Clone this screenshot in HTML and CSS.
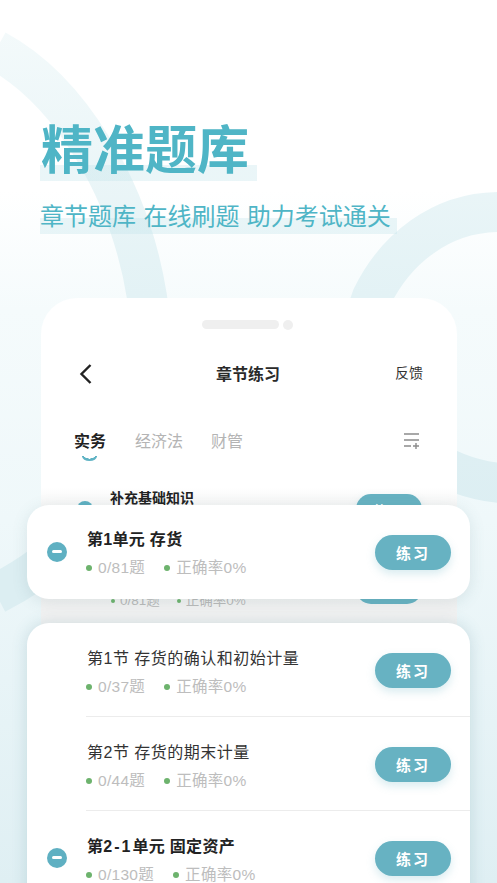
FILE: index.html
```html
<!DOCTYPE html>
<html lang="zh-CN">
<head>
<meta charset="utf-8">
<title>精准题库</title>
<link rel="stylesheet" href="styles.css">
</head>
<body>
<svg class="bg-arcs" viewBox="0 0 497 883" aria-hidden="true">
  <defs>
    <linearGradient id="arcFade" gradientUnits="userSpaceOnUse" x1="0" y1="20" x2="0" y2="520">
      <stop offset="0" stop-color="#f4fafb"/>
      <stop offset=".55" stop-color="#e3f2f5"/>
      <stop offset="1" stop-color="#dceef2"/>
    </linearGradient>
  </defs>
  <path class="arc" d="M-4 50C70 90 130 190 147 297C165 420 120 530 -4 594"/>
  <path class="arc" d="M500 212C440 212 395 250 372 297C350 350 380 470 500 483"/>
</svg>
<main class="screen">
  <header class="hero">
    <h1 class="hero-title"><span class="mark">精准题库</span></h1>
    <p class="hero-sub"><span class="mark">章节题库 在线刷题 助力考试通关</span></p>
  </header>
  <section class="phone">
    <div class="notch"><span class="notch-bar"></span><span class="notch-dot"></span></div>
    <div class="nav">
      <svg class="back" viewBox="0 0 14 22"><path d="M12 2 3 11l9 9"/></svg>
      <span class="nav-title">章节练习</span>
      <span class="nav-action">反馈</span>
    </div>
    <div class="tabs">
      <span class="tab active">实务</span>
      <span class="tab">经济法</span>
      <span class="tab">财管</span>
      <svg class="filter" viewBox="0 0 16 16"><path d="M0 1h15M0 7h15M0 13h7M9 13h6M12 10v6"/></svg>
    </div>
    <div class="behind">
      <span class="minus behind-minus"></span>
      <div class="behind-title">补充基础知识</div>
      <span class="btn behind-btn">练习</span>
      <div class="meta behind-meta"><span class="dot"></span><span>0/81题</span><span class="dot second"></span><span>正确率0%</span></div>
      <span class="behind-btn2"></span>
    </div>
  </section>
  <article class="card card-float">
    <div class="row">
      <span class="minus"></span>
      <div class="info">
        <div class="name strong">第1单元 存货</div>
        <div class="meta"><span class="dot"></span><span>0/81题</span><span class="dot second"></span><span>正确率0%</span></div>
      </div>
      <span class="btn">练习</span>
    </div>
  </article>
  <article class="card card-list">
    <div class="row line">
      <div class="info">
        <div class="name">第1节 存货的确认和初始计量</div>
        <div class="meta"><span class="dot"></span><span>0/37题</span><span class="dot second"></span><span>正确率0%</span></div>
      </div>
      <span class="btn">练习</span>
    </div>
    <div class="row line">
      <div class="info">
        <div class="name">第2节 存货的期末计量</div>
        <div class="meta"><span class="dot"></span><span>0/44题</span><span class="dot second"></span><span>正确率0%</span></div>
      </div>
      <span class="btn">练习</span>
    </div>
    <div class="row">
      <span class="minus"></span>
      <div class="info">
        <div class="name strong">第<span class="num">2-1</span>单元 固定资产</div>
        <div class="meta"><span class="dot"></span><span>0/130题</span><span class="dot second"></span><span>正确率0%</span></div>
      </div>
      <span class="btn">练习</span>
    </div>
  </article>
</main>
</body>
</html>
```
FILE: styles.css
```css
* { box-sizing: border-box; }
html, body { margin: 0; height: 100%; }
body {
  width: 497px;
  height: 883px;
  overflow: hidden;
  position: relative;
  font-family: "Liberation Sans", "Noto Sans CJK SC", sans-serif;
  background: linear-gradient(180deg, #ffffff 0, #ffffff 190px, #f5fbfc 310px, #eff8fa 520px, #dfeff3 883px);
}
.bg-arcs { position: absolute; inset: 0; width: 497px; height: 883px; }
.arc { fill: none; stroke: url(#arcFade); stroke-width: 40; }
.screen { position: relative; width: 497px; height: 883px; overflow: hidden; }
.hero { padding: 113px 0 0 40px; height: 298px; color: #4fb5c6; }
.hero-title { margin: 0; font-size: 52px; line-height: 68px; font-weight: 700; font-family: "Noto Sans CJK SC", sans-serif; }
.hero-sub { margin: 15px 0 0; font-size: 24px; line-height: 38px; font-family: "Noto Sans CJK SC", sans-serif; word-spacing: 2px; }
.mark { display: inline-block; }
.hero-title .mark { padding: 0 8px 0 1px; background: linear-gradient(180deg, transparent 52px, rgba(190, 226, 233, .32) 52px); }
.hero-sub .mark { padding-right: 6px; background: linear-gradient(180deg, transparent 22px, rgba(190, 226, 233, .32) 22px); }
.phone {
  position: relative;
  margin-left: 41px;
  width: 416px;
  height: 585px;
  border-radius: 36px 36px 0 0;
  background: linear-gradient(180deg, #fff 0, #fff 190px, #f6f6f6 207px, #f2f2f2 310px, #f1f1f1 100%);
}
.notch { display: flex; justify-content: center; align-items: center; gap: 4px; padding: 22px 3px 0 0; height: 31px; }
.notch-bar { width: 77px; height: 9px; border-radius: 5px; background: #efefef; }
.notch-dot { width: 10px; height: 10px; border-radius: 50%; background: #efefef; }
.nav { position: relative; display: flex; align-items: center; justify-content: center; margin-top: 27px; height: 34px; padding-right: 2px; }
.back { position: absolute; left: 37px; top: 7px; width: 15px; height: 22px; fill: none; stroke: #222; stroke-width: 2.4; }
.nav-title { font-size: 16px; font-weight: 700; color: #2a2a2a; font-family: "Noto Sans CJK SC", sans-serif; }
.nav-action { position: absolute; right: 34px; top: 6px; font-size: 14px; line-height: 20px; color: #333; font-family: "Noto Sans CJK SC", sans-serif; }
.tabs { position: relative; display: flex; align-items: center; gap: 29px; margin-top: 33px; padding-left: 33px; height: 34px; font-family: "Noto Sans CJK SC", sans-serif; font-size: 16px; color: #b4b4b4; }
.tabs .tab:nth-child(3) { margin-left: -1px; }
.tab.active { position: relative; color: #222; font-weight: 700; }
.tab.active::after { content: ""; position: absolute; left: 8px; top: 28px; width: 15px; height: 5px; border-radius: 0 0 8px 8px / 0 0 5px 5px; background: radial-gradient(ellipse 8px 5px at 50% -1px, transparent 70%, #5fb3c4 72%); }
.filter { position: absolute; left: 363px; top: 10px; width: 16px; height: 16px; fill: none; stroke: #8c8c8c; stroke-width: 1.4; }
.behind { position: absolute; left: 0; top: 190px; width: 416px; height: 135px; }
.behind-title { position: absolute; left: 69px; top: 0; font-size: 14px; line-height: 19px; font-weight: 700; color: #222; font-family: "Noto Sans CJK SC", sans-serif; }
.minus.behind-minus { left: 36px; top: 13px; width: 16px; height: 16px; }
.btn.behind-btn { position: absolute; left: 315px; top: 6px; width: 66px; height: 30px; font-size: 13px; }
.behind-btn2 { position: absolute; left: 315px; top: 86px; width: 66px; height: 30px; border-radius: 15px; background: #67b2c2; }
.meta.behind-meta { position: absolute; left: 69px; top: 103px; margin: 0; font-size: 13.5px; color: #b9b9b9; line-height: 20px; letter-spacing: 0; }
.behind-meta .dot { width: 4px; height: 4px; margin: 0 5px 0 1px; }
.behind-meta .dot.second { margin-left: 17px; }
.card { position: absolute; left: 27px; width: 443px; background: #fff; }
.card-float { top: 505px; height: 94px; border-radius: 22px; box-shadow: 0 3px 16px rgba(70, 110, 120, .14); }
.card-float .info { padding-top: 3px; }
.card-list { top: 623px; height: 290px; border-radius: 22px 22px 0 0; box-shadow: 0 0 16px rgba(60, 120, 135, .2); }
.row { position: relative; display: flex; align-items: center; height: 94px; padding: 0 19px 0 60px; }
.row.line::after { content: ""; position: absolute; left: 59px; right: 0; bottom: 0; height: 1px; background: #ececec; }
.info { flex: 1; min-width: 0; padding-top: 5px; }
.name { font-size: 16px; line-height: 22px; letter-spacing: .5px; color: #333; }
.name.strong { font-weight: 700; color: #222; letter-spacing: .3px; }
.num { letter-spacing: 2px; }
.meta { display: flex; align-items: center; margin-top: 6px; font-size: 15.5px; line-height: 22px; letter-spacing: .3px; color: #bdbdbd; }
.dot { flex: none; width: 6px; height: 6px; border-radius: 50%; background: #6db36d; margin-right: 6px; margin-left: -1px; }
.dot.second { margin-left: 19px; }
.minus { position: absolute; left: 20px; top: 37px; width: 20px; height: 20px; border-radius: 50%; background: #5fb0c2; }
.minus::after { content: ""; position: absolute; left: 25%; top: 42%; width: 50%; height: 3px; border-radius: 2px; background: #fff; }
.btn { flex: none; display: flex; align-items: center; justify-content: center; width: 76px; height: 35px; border-radius: 18px; background: #67b2c2; color: #fff; font-size: 15px; font-weight: 700; letter-spacing: 2px; font-family: "Noto Sans CJK SC", sans-serif; box-shadow: 0 4px 8px rgba(103, 178, 194, .25); }
```
